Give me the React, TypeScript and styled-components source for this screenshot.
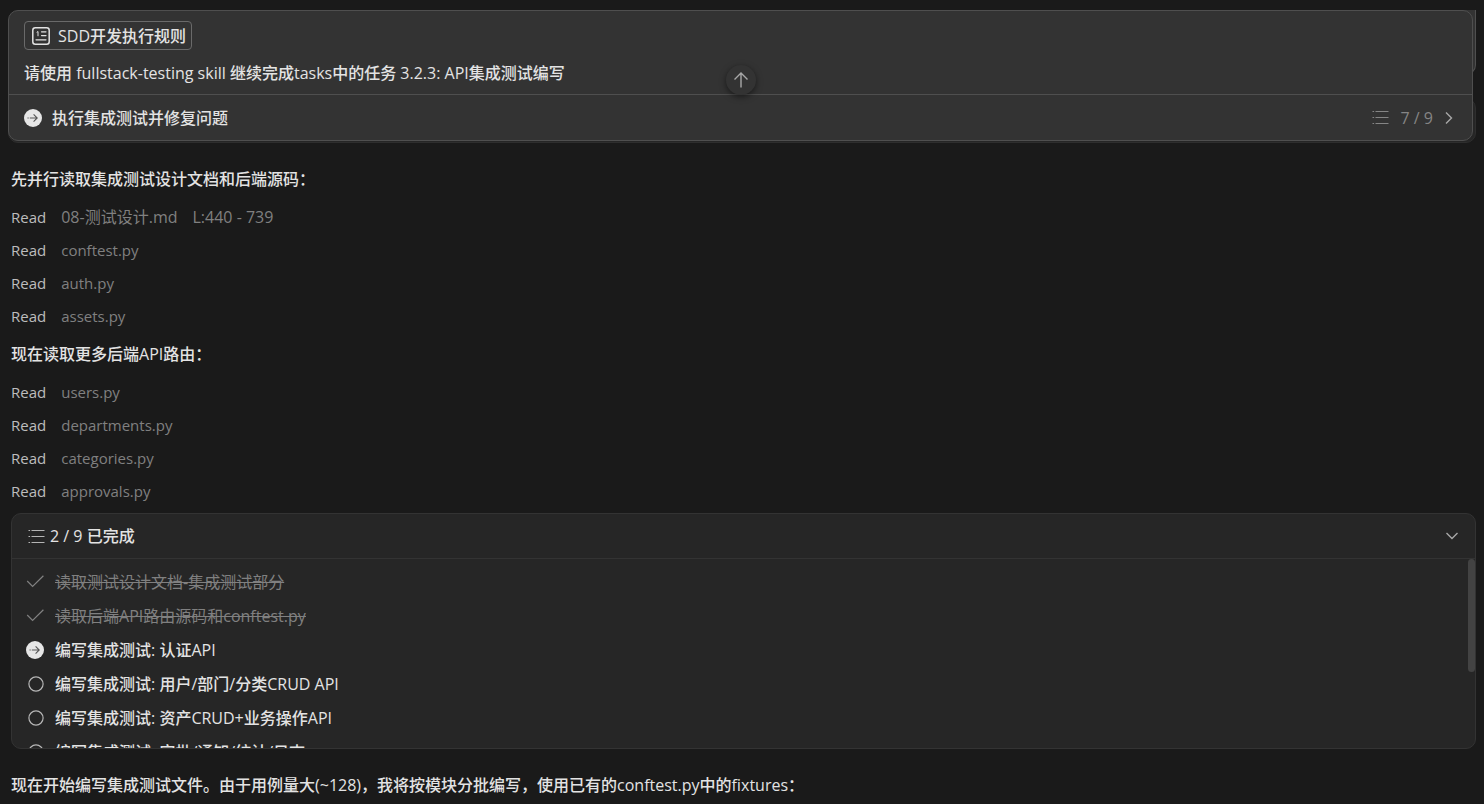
import React from 'react';
import styled, { createGlobalStyle, css } from 'styled-components';

const Global = createGlobalStyle`
  *, *::before, *::after { box-sizing: border-box; }
  html { height: 100%; overflow: hidden; background: #1a1a1a; }
  body {
    margin: 0;
    background: #1a1a1a;
    color: #e3e3e3;
    font: 500 16px/22px "Noto Sans", "Noto Sans CJK SC", sans-serif;
  }
  button { font: inherit; color: inherit; background: none; border: 0; padding: 0; cursor: pointer; }
  ul { list-style: none; margin: 0; padding: 0; }
  p { margin: 0; }
  svg { display: block; flex: none; }
`;

const Latin = styled.span<{ $small?: boolean }>`
  font-family: "Open Sans", sans-serif;
  font-size: ${({ $small }) => ($small ? 15 : 16)}px;
  font-weight: 400;
`;

/* Latin runs are set lighter than the Chinese text around them. */
const Mixed = ({ children, small }: { children: string; small?: boolean }) => (
  <>
    {children
      .split(/([\x20-\x7e]+)/)
      .filter(Boolean)
      .map((run, i) => (/^[\x20-\x7e]/.test(run) ? <Latin key={i} $small={small}>{run}</Latin> : run))}
  </>
);

const Page = styled.main`
  padding: 10px 8px 0;
`;

const PromptStack = styled.section`
  position: relative;
  z-index: 0;
  margin-right: 3px;
`;

const PromptCard = styled.div`
  border: 1px solid #4f4f4f;
  border-radius: 10px;
  background: #333;
`;

const BackCard = styled.div<{ $lower?: boolean }>`
  position: absolute;
  z-index: -1;
  right: -3px;
  left: 0;
  border: 1px solid #4f4f4f;
  background: #333;
  ${({ $lower }) =>
    $lower
      ? css`top: 88px; bottom: -2px; border-color: #2e2e2e; background: #262626; border-radius: 10px;`
      : css`top: 0; left: 50%; height: 65px; border-top: 0; border-radius: 0 0 10px 0;`}
`;

const Prompt = styled.div`
  display: flex;
  flex-direction: column;
  align-items: flex-start;
  gap: 12px;
  padding: 10px 15px;
  border-bottom: 1px solid #4f4f4f;
`;

const RuleChip = styled.button`
  display: flex;
  align-items: center;
  gap: 8px;
  height: 29px;
  padding: 0 5px 0 7px;
  border: 1px solid #6a6a6a;
  border-radius: 4px;
`;

const CurrentTask = styled.div`
  display: flex;
  align-items: center;
  gap: 10px;
  height: 45px;
  padding: 0 19px 0 15px;
`;

const Progress = styled.button`
  display: flex;
  align-items: center;
  gap: 12px;
  margin-left: auto;
  color: #858585;
`;

const ScrollTop = styled.button`
  position: absolute;
  top: 55px;
  left: 50%;
  display: grid;
  place-items: center;
  width: 30px;
  height: 30px;
  margin-left: -15px;
  border-radius: 50%;
  background: #333;
  color: #a8a8a8;
  box-shadow: 0 2px 6px rgba(0, 0, 0, 0.5);
`;

const Conversation = styled.div`
  padding: 27px 0 0 3px;
`;

const Message = styled.p`
  line-height: 22px;
`;

const ReadList = styled.ul`
  display: grid;
  gap: 11px;
  margin: 16px 0;
`;

const ReadRow = styled.li`
  display: flex;
  gap: 15px;
  color: #808080;
  font-weight: 400;
`;

const Verb = styled.span`
  color: #bdbdbd;
`;

const TodoCard = styled.section`
  margin: -5px 0 25px;
  border: 1px solid #333;
  border-radius: 10px;
  background: #262626;
  overflow: hidden;
`;

const TodoHeader = styled.button`
  display: flex;
  align-items: center;
  gap: 5px;
  width: 100%;
  height: 45px;
  padding: 0 17px 0 16px;
  border-bottom: 1px solid #333;
  svg:last-child { margin-left: auto; }
`;

const TodoBody = styled.div`
  position: relative;
`;

const TodoList = styled.ul`
  height: 189px;
  padding: 6px 14px;
  overflow: hidden;
`;

const ScrollThumb = styled.div`
  position: absolute;
  top: 0;
  right: 0;
  width: 7px;
  height: 60%;
  border-radius: 4px;
  background: #434343;
`;

const TodoRow = styled.li<{ $done?: boolean }>`
  display: flex;
  align-items: center;
  gap: 11px;
  height: 34px;
  ${({ $done }) => $done && css`
    color: #808080;
    font-weight: 400;
    span { text-decoration: line-through; }
  `}
`;

const ListIcon = ({ color = '#858585' }: { color?: string }) => (
  <svg width="17" height="15" viewBox="0 0 17 15" stroke={color} fill="none">
    <path d="M.5 1.5h1.6M3.5 1.5h13M.5 7.5h1.6M3.5 7.5h13M.5 13.5h1.6M3.5 13.5h13" strokeWidth="1.1" />
  </svg>
);

const RuleIcon = () => (
  <svg width="18" height="18" viewBox="0 0 18 18" fill="none" stroke="#e3e3e3" strokeLinecap="round">
    <rect x="0.8" y="0.8" width="16.4" height="16.4" rx="2.5" strokeWidth="1.5" />
    <path d="M9.5 4.8h4.5M9.5 8.6h4.5M4 12.8h10" strokeWidth="1.2" />
    <path d="M5 5.2l1-.7v4.3" strokeWidth="1" />
  </svg>
);

const ActiveIcon = () => (
  <svg width="18" height="18" viewBox="0 0 18 18" fill="none">
    <circle cx="9" cy="9" r="9" fill="#e6e6e6" />
    <path d="M3.5 9h1.2M5.8 9h7.4M9.6 5.4L13.2 9l-3.6 3.6" stroke="#555" strokeWidth="1.1" />
  </svg>
);

const CheckIcon = () => (
  <svg width="18" height="18" viewBox="0 0 18 18" fill="none">
    <path d="M1.2 8l5.4 5.4L17.4 2.8" stroke="#808080" strokeWidth="1.2" />
  </svg>
);

const PendingIcon = () => (
  <svg width="18" height="18" viewBox="0 0 18 18" fill="none">
    <circle cx="10" cy="9" r="7.1" stroke="#b5b5b5" strokeWidth="1.2" />
  </svg>
);

const Chevron = ({ down }: { down?: boolean }) => (
  <svg width={down ? 12 : 8} height={down ? 8 : 12} viewBox={down ? '0 0 12 8' : '0 0 8 12'} fill="none">
    <path d={down ? 'M.5 1L6 6.5 11.5 1' : 'M1 .5L6.5 6 1 11.5'} stroke="#a8a8a8" strokeWidth="1.4" />
  </svg>
);

const ArrowUp = () => (
  <svg width="16" height="16" viewBox="0 0 16 16" fill="none" stroke="currentColor" strokeWidth="1.4">
    <path d="M8 15.5V1M1.5 7.5L8 1l6.5 6.5" />
  </svg>
);

type File = { name: string; range?: string };

const firstReads: File[] = [
  { name: '08-测试设计.md', range: 'L:440 - 739' },
  { name: 'conftest.py' },
  { name: 'auth.py' },
  { name: 'assets.py' },
];
const routeReads: File[] = [
  { name: 'users.py' },
  { name: 'departments.py' },
  { name: 'categories.py' },
  { name: 'approvals.py' },
];

type State = 'done' | 'active' | 'pending';

const todos: { text: string; state: State }[] = [
  { text: '读取测试设计文档-集成测试部分', state: 'done' },
  { text: '读取后端API路由源码和conftest.py', state: 'done' },
  { text: '编写集成测试: 认证API', state: 'active' },
  { text: '编写集成测试: 用户/部门/分类CRUD API', state: 'pending' },
  { text: '编写集成测试: 资产CRUD+业务操作API', state: 'pending' },
  { text: '编写集成测试: 审批/通知/统计/日志', state: 'pending' },
];

const stateIcon = { done: <CheckIcon />, active: <ActiveIcon />, pending: <PendingIcon /> };

const Reads = ({ files }: { files: File[] }) => (
  <ReadList>
    {files.map((f) => (
      <ReadRow key={f.name}>
        <Verb><Mixed small>Read</Mixed></Verb>
        <span><Mixed small={!f.range}>{f.name}</Mixed></span>
        {f.range && <span><Mixed>{f.range}</Mixed></span>}
      </ReadRow>
    ))}
  </ReadList>
);

export default function App() {
  return (
    <Page>
      <Global />
      <PromptStack>
        <BackCard $lower />
        <BackCard />
        <PromptCard>
          <Prompt>
            <RuleChip><RuleIcon /><span><Mixed>SDD开发执行规则</Mixed></span></RuleChip>
            <p><Mixed>请使用 fullstack-testing skill 继续完成tasks中的任务 3.2.3: API集成测试编写</Mixed></p>
          </Prompt>
          <CurrentTask>
            <ActiveIcon />
            <span>执行集成测试并修复问题</span>
            <Progress><ListIcon /><Mixed>7 / 9</Mixed><Chevron /></Progress>
          </CurrentTask>
        </PromptCard>
        <ScrollTop aria-label="回到顶部"><ArrowUp /></ScrollTop>
      </PromptStack>
      <Conversation>
        <Message>先并行读取集成测试设计文档和后端源码：</Message>
        <Reads files={firstReads} />
        <Message><Mixed>现在读取更多后端API路由：</Mixed></Message>
        <Reads files={routeReads} />
        <TodoCard>
          <TodoHeader><ListIcon color="#b5b5b5" /><span><Mixed>2 / 9 已完成</Mixed></span><Chevron down /></TodoHeader>
          <TodoBody>
            <TodoList>
              {todos.map((t) => (
                <TodoRow key={t.text} $done={t.state === 'done'}>
                  {stateIcon[t.state]}
                  <span><Mixed>{t.text}</Mixed></span>
                </TodoRow>
              ))}
            </TodoList>
            <ScrollThumb />
          </TodoBody>
        </TodoCard>
        <Message><Mixed>现在开始编写集成测试文件。由于用例量大(~128)，我将按模块分批编写，使用已有的conftest.py中的fixtures：</Mixed></Message>
      </Conversation>
    </Page>
  );
}
